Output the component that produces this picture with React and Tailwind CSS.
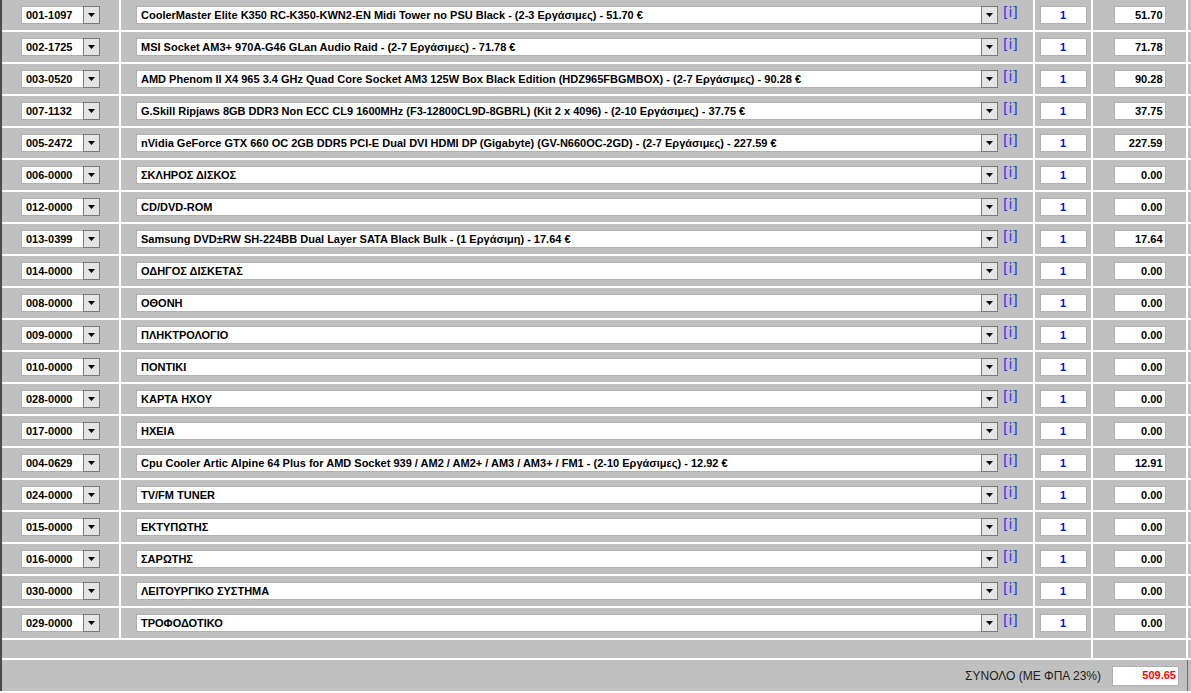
import React from "react";

const ROWS = [
  ["001-1097", "CoolerMaster Elite K350 RC-K350-KWN2-EN Midi Tower no PSU Black - (2-3 Εργάσιμες) - 51.70 €", "51.70"],
  ["002-1725", "MSI Socket AM3+ 970A-G46 GLan Audio Raid - (2-7 Εργάσιμες) - 71.78 €", "71.78"],
  ["003-0520", "AMD Phenom II X4 965 3.4 GHz Quad Core Socket AM3 125W Box Black Edition (HDZ965FBGMBOX) - (2-7 Εργάσιμες) - 90.28 €", "90.28"],
  ["007-1132", "G.Skill Ripjaws 8GB DDR3 Non ECC CL9 1600MHz (F3-12800CL9D-8GBRL) (Kit 2 x 4096) - (2-10 Εργάσιμες) - 37.75 €", "37.75"],
  ["005-2472", "nVidia GeForce GTX 660 OC 2GB DDR5 PCI-E Dual DVI HDMI DP (Gigabyte) (GV-N660OC-2GD) - (2-7 Εργάσιμες) - 227.59 €", "227.59"],
  ["006-0000", "ΣΚΛΗΡΟΣ ΔΙΣΚΟΣ", "0.00"],
  ["012-0000", "CD/DVD-ROM", "0.00"],
  ["013-0399", "Samsung DVD±RW SH-224BB Dual Layer SATA Black Bulk - (1 Εργάσιμη) - 17.64 €", "17.64"],
  ["014-0000", "ΟΔΗΓΟΣ ΔΙΣΚΕΤΑΣ", "0.00"],
  ["008-0000", "ΟΘΟΝΗ", "0.00"],
  ["009-0000", "ΠΛΗΚΤΡΟΛΟΓΙΟ", "0.00"],
  ["010-0000", "ΠΟΝΤΙΚΙ", "0.00"],
  ["028-0000", "ΚΑΡΤΑ ΗΧΟΥ", "0.00"],
  ["017-0000", "ΗΧΕΙΑ", "0.00"],
  ["004-0629", "Cpu Cooler Artic Alpine 64 Plus for AMD Socket 939 / AM2 / AM2+ / AM3 / AM3+ / FM1 - (2-10 Εργάσιμες) - 12.92 €", "12.91"],
  ["024-0000", "TV/FM TUNER", "0.00"],
  ["015-0000", "ΕΚΤΥΠΩΤΗΣ", "0.00"],
  ["016-0000", "ΣΑΡΩΤΗΣ", "0.00"],
  ["030-0000", "ΛΕΙΤΟΥΡΓΙΚΟ ΣΥΣΤΗΜΑ", "0.00"],
  ["029-0000", "ΤΡΟΦΟΔΟΤΙΚΟ", "0.00"],
];

// little grey drop button of an old-style select
const DropBtn = () => (
  <div className="flex h-[18px] w-[17px] shrink-0 items-center justify-center border border-[#7a7a7a] bg-[#e4e4e4]">
    <svg width="7" height="4" viewBox="0 0 7 4" aria-hidden="true">
      <path d="M0 0h7L3.5 4z" fill="#000" />
    </svg>
  </div>
);

const Select = ({ text, width }) => (
  <div className="flex h-[18px] shrink-0" style={{ width }}>
    <div className="flex min-w-0 flex-1 items-center overflow-hidden whitespace-nowrap border border-r-0 border-[#b0b0b0] bg-white pl-[4px] text-[11px] font-bold text-black">
      {text}
    </div>
    <DropBtn />
  </div>
);

const Row = ({ code, name, price }) => (
  <div className="flex h-[30px] gap-[2px]">
    <div className="flex w-[117px] shrink-0 items-center justify-center bg-[#c0c0c0]">
      <Select text={code} width={79} />
    </div>
    <div className="flex w-[912px] shrink-0 items-center justify-center gap-[5px] bg-[#c0c0c0]">
      <Select text={name} width={862} />
      <a className="mb-[6px] w-[15px] font-['DejaVu_Sans',Verdana,sans-serif] text-[14px] leading-none text-[#3333ff]" href="#">[i]</a>
    </div>
    <div className="flex w-[56px] shrink-0 items-center justify-center bg-[#c0c0c0]">
      <div className="flex h-[18px] w-[47px] items-center justify-center border border-[#b0b0b0] bg-white text-[11px] font-bold text-[#0000ff]">
        1
      </div>
    </div>
    <div className="flex w-[93px] shrink-0 items-center justify-center bg-[#c0c0c0]">
      <div className="flex h-[18px] w-[52px] items-center justify-end border border-[#b0b0b0] bg-white pr-[2px] text-[11px] font-bold text-black">
        {price}
      </div>
    </div>
    <div className="flex-1 bg-[#c0c0c0]" />
  </div>
);

export default function App() {
  return (
    <div className="h-[693px] w-[1191px] overflow-hidden bg-white font-['Liberation_Sans',Arial,sans-serif]">
      <div className="flex flex-col gap-[2px] border-l-2 border-[#4a4a4a] bg-white">
        {ROWS.map(([code, name, price]) => (
          <Row key={code} code={code} name={name} price={price} />
        ))}
        <div className="flex h-[18px] gap-[2px]">
          <div className="w-[1089px] shrink-0 bg-[#c0c0c0]" />
          <div className="w-[93px] shrink-0 bg-[#c0c0c0]" />
          <div className="flex-1 bg-[#c0c0c0]" />
        </div>
        <div className="flex h-[31px]">
          <div className="flex w-[1185px] shrink-0 items-center justify-end gap-[11px] bg-[#c0c0c0] pr-[8px]">
            <span className="text-[12px] text-[#202020]">ΣΥΝΟΛΟ (ΜΕ ΦΠΑ 23%)</span>
            <div className="flex h-[20px] w-[67px] items-center justify-end border border-[#b0b0b0] bg-white pr-[2px] text-[11px] font-bold text-[#ff0000]">
              509.65
            </div>
          </div>
          <div className="w-px shrink-0 bg-[#6a6a6a]" />
          <div className="flex-1 bg-[#c0c0c0]" />
        </div>
      </div>
    </div>
  );
}
